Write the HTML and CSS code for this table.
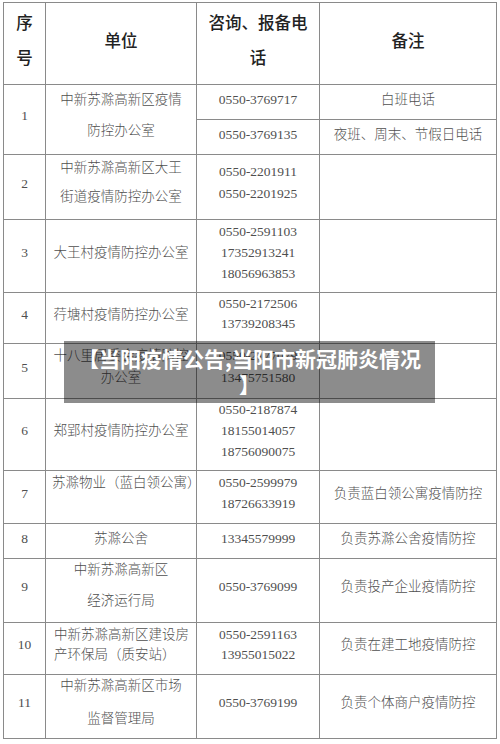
FILE: index.html
```html
<!DOCTYPE html>
<html lang="zh-CN">
<head>
<meta charset="utf-8">
<title>当阳疫情公告</title>
<link rel="stylesheet" href="styles.css">
</head>
<body>
<div class="page">
  <table class="contacts">
    <colgroup>
      <col class="col-no"><col class="col-unit"><col class="col-phone"><col class="col-note">
    </colgroup>
    <thead>
      <tr class="h-head">
        <th class="two">序<br>号</th>
        <th>单位</th>
        <th class="two">咨询、报备电<br>话</th>
        <th>备注</th>
      </tr>
    </thead>
    <tbody>
      <tr class="h-35">
        <td rowspan="2">1</td>
        <td rowspan="2" class="gap-11 pb-9"><span class="ln">中新苏滁高新区疫情</span><span class="ln">防控办公室</span></td>
        <td class="pb-5">0550-3769717</td>
        <td class="pb-5">白班电话</td>
      </tr>
      <tr class="h-35">
        <td class="pb-5">0550-3769135</td>
        <td class="pb-5">夜班、周末、节假日电话</td>
      </tr>
      <tr class="h-65">
        <td>2</td>
        <td class="gap-9 pb-10"><span class="ln">中新苏滁高新区大王</span><span class="ln">街道疫情防控办公室</span></td>
        <td class="lh-22">0550-2201911<br>0550-2201925</td>
        <td></td>
      </tr>
      <tr class="h-73">
        <td>3</td>
        <td>大王村疫情防控办公室</td>
        <td>0550-2591103<br>17352913241<br>18056963853</td>
        <td></td>
      </tr>
      <tr class="h-51">
        <td>4</td>
        <td>荇塘村疫情防控办公室</td>
        <td class="lh-20">0550-2172506<br>13739208345</td>
        <td></td>
      </tr>
      <tr class="h-55">
        <td>5</td>
        <td class="lh-22">十八里居委会疫情防控<br>办公室</td>
        <td class="lh-22">0550-2177079<br>13475751580</td>
        <td></td>
      </tr>
      <tr class="h-72">
        <td>6</td>
        <td>郑郢村疫情防控办公室</td>
        <td>0550-2187874<br>18155014057<br>18756090075</td>
        <td></td>
      </tr>
      <tr class="h-53">
        <td>7</td>
        <td class="top overflow">苏滁物业（蓝白领公寓）</td>
        <td>0550-2599979<br>18726633919</td>
        <td>负责蓝白领公寓疫情防控</td>
      </tr>
      <tr class="h-35">
        <td class="pb-5">8</td>
        <td class="pb-5">苏滁公舍</td>
        <td class="pb-5">13345579999</td>
        <td class="pb-5">负责苏滁公舍疫情防控</td>
      </tr>
      <tr class="h-64">
        <td>9</td>
        <td class="gap-11 pb-11"><span class="ln">中新苏滁高新区</span><span class="ln">经济运行局</span></td>
        <td>0550-3769099</td>
        <td>负责投产企业疫情防控</td>
      </tr>
      <tr class="h-52">
        <td>10</td>
        <td class="lh-20 left">中新苏滁高新区建设房<br>产环保局（质安站）</td>
        <td class="lh-20">0550-2591163<br>13955015022</td>
        <td>负责在建工地疫情防控</td>
      </tr>
      <tr class="h-64">
        <td>11</td>
        <td class="gap-13 pb-9"><span class="ln">中新苏滁高新区市场</span><span class="ln">监督管理局</span></td>
        <td>0550-3769199</td>
        <td>负责个体商户疫情防控</td>
      </tr>
    </tbody>
  </table>

  <div class="banner">【当阳疫情公告,当阳市新冠肺炎情况<br>】</div>
</div>
</body>
</html>
```

FILE: styles.css
```css
html, body {
  margin: 0;
  padding: 0;
  background: #ffffff;
}

.page {
  position: relative;
  width: 500px;
  height: 744px;
  overflow: hidden;
}

.contacts {
  border-collapse: collapse;
  table-layout: fixed;
  width: 493px;
  margin: 2px 0 0 3px;
  font-family: "Liberation Serif", "Noto Sans CJK SC", serif;
  font-size: 13.5px;
  font-weight: 300;
  color: #4f4f4f;
}

.col-no { width: 42px; }
.col-unit { width: 151px; }
.col-phone { width: 123px; }
.col-note { width: 177px; }

.contacts th,
.contacts td {
  border: 1.5px solid #8a8a8a;
  padding: 0 4px 8px;
  text-align: center;
  vertical-align: middle;
  line-height: 21px;
  white-space: nowrap;
}

.contacts th {
  font-family: "Noto Sans CJK SC", sans-serif;
  font-size: 16.5px;
  font-weight: 500;
  color: #222222;
  padding-bottom: 7px;
}

.contacts th.two { line-height: 35px; }

.h-head { height: 82px; }
.h-35 { height: 35px; }
.h-51 { height: 51px; }
.h-52 { height: 52px; }
.h-53 { height: 53px; }
.h-55 { height: 55px; }
.h-64 { height: 64px; }
.h-65 { height: 65px; }
.h-72 { height: 72px; }
.h-73 { height: 73px; }

.ln {
  display: block;
  line-height: 20px;
}

.gap-9 .ln + .ln { margin-top: 9px; }
.gap-11 .ln + .ln { margin-top: 11px; }
.gap-13 .ln + .ln { margin-top: 13px; }

.contacts td.lh-20 { line-height: 20px; }
.contacts td.lh-22 { line-height: 22px; }
.contacts td.pb-5 { padding-bottom: 5px; }
.contacts td.pb-9 { padding-bottom: 9px; }
.contacts td.pb-10 { padding-bottom: 10px; }
.contacts td.pb-11 { padding-bottom: 11px; }

.contacts td.top {
  vertical-align: top;
  padding-top: 1px;
}

.contacts td.overflow {
  text-align: left;
  padding-left: 6px;
  padding-right: 0;
  overflow: visible;
}

.contacts td.left {
  text-align: left;
  padding-left: 8px;
}

.banner {
  position: absolute;
  left: 64px;
  top: 341px;
  width: 371px;
  height: 62px;
  box-sizing: border-box;
  padding-top: 4px;
  background: rgba(0, 0, 0, 0.45);
  color: #ffffff;
  font-family: "Noto Sans CJK SC", sans-serif;
  font-size: 21px;
  font-weight: 700;
  line-height: 26px;
  text-align: center;
}
```
